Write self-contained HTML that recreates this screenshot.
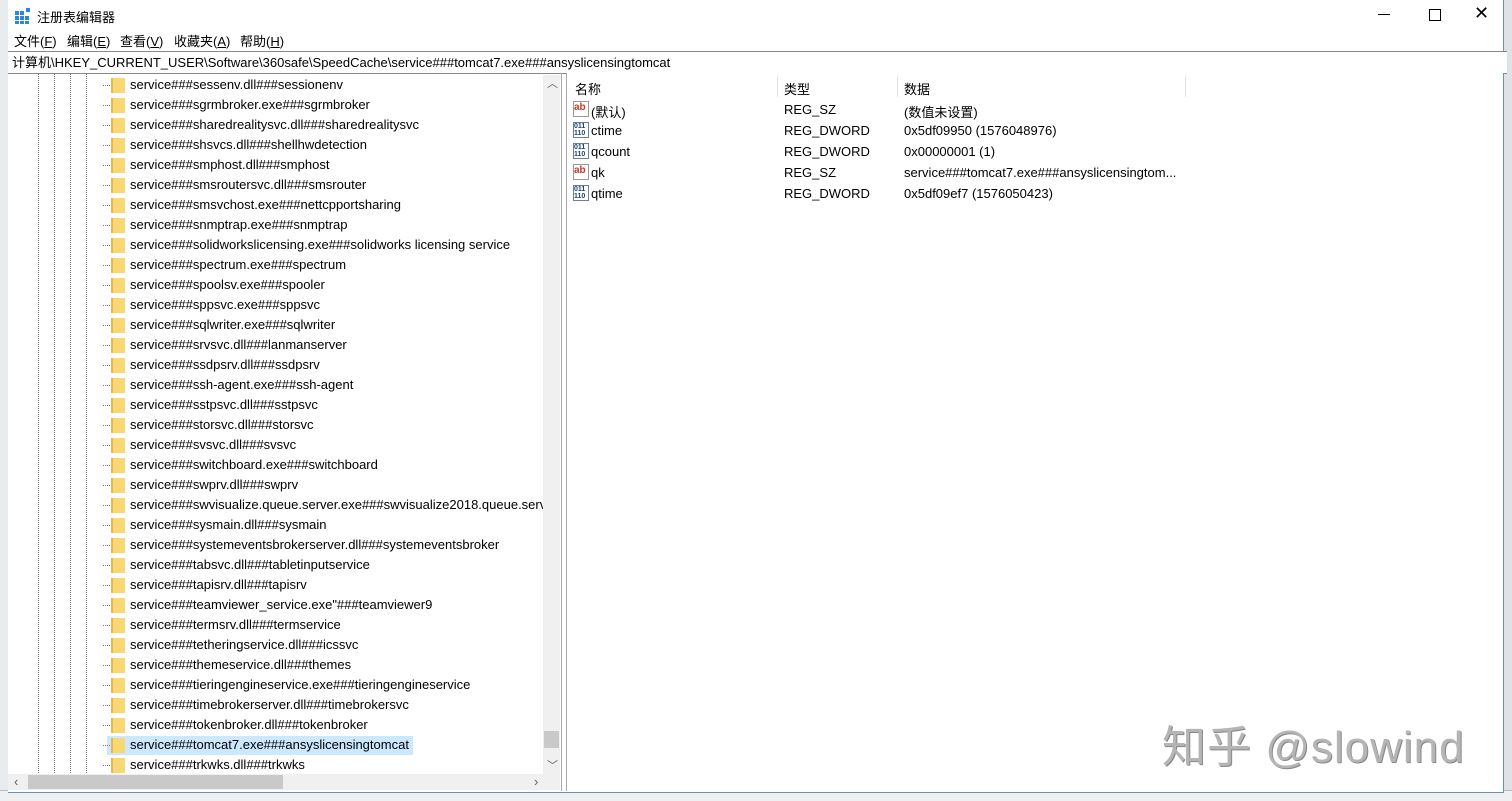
<!DOCTYPE html><html><head><meta charset="utf-8"><style>
body{margin:0;width:1512px;height:800px;overflow:hidden;background:#dfe3e8;font-family:"Liberation Sans","Noto Sans CJK SC",sans-serif;font-size:13px;color:#000;position:relative}
.abs{position:absolute}
.win{left:8px;top:0;width:1495px;height:792px;background:#fff;border-right:1px solid #6d8fb0;border-bottom:1px solid #6d8fb0}
.row{position:absolute;left:0;height:20px;line-height:20px;white-space:nowrap}
.fold{position:absolute;left:103px;top:3px;width:14px;height:15px;background:#f8d775;border-left:2px solid #e8b94a;box-sizing:border-box}
.txt{position:absolute;left:122px}
.vl{position:absolute;top:75px;height:700px;border-left:1px dotted #777}
.hd{position:absolute;left:95px;top:10px;width:7px;border-top:1px dotted #777}
</style></head><body>
<div class="abs" style="left:0;top:0;width:8px;height:800px;background:#e8ecef"></div>
<div class="abs" style="left:0;top:790px;width:1512px;height:10px;background:#eef0f2;border-top:1px solid #bbb"></div>
<div class="abs win">
 <svg class="abs" style="left:7px;top:7px" width="17" height="17"><rect x="0" y="4" width="4" height="4" fill="#2b88d8"/><rect x="5" y="4" width="4" height="4" fill="#2b88d8"/><rect x="0" y="9" width="4" height="4" fill="#2b88d8"/><rect x="5" y="9" width="4" height="4" fill="#2b88d8"/><rect x="10" y="9" width="4" height="4" fill="#2b88d8"/><rect x="0" y="14" width="4" height="3" fill="#2b88d8"/><rect x="5" y="14" width="4" height="3" fill="#2b88d8"/><rect x="10" y="14" width="4" height="3" fill="#2b88d8"/><rect x="11" y="1" width="4" height="4" fill="#2b88d8"/></svg>
 <div class="abs" style="left:29px;top:7px;font-size:13px">注册表编辑器</div>
 <div class="abs" style="left:1370px;top:14px;width:12px;border-top:1px solid #000"></div>
 <div class="abs" style="left:1421px;top:9px;width:10px;height:10px;border:1px solid #000"></div>
 <div class="abs" style="left:1466px;top:3px;font-size:18px;line-height:20px">✕</div>
 <div class="abs" style="left:6px;top:31px">文件(<u>F</u>)</div>
 <div class="abs" style="left:59px;top:31px">编辑(<u>E</u>)</div>
 <div class="abs" style="left:112px;top:31px">查看(<u>V</u>)</div>
 <div class="abs" style="left:166px;top:31px">收藏夹(<u>A</u>)</div>
 <div class="abs" style="left:232px;top:31px">帮助(<u>H</u>)</div>
 <div class="abs" style="left:0;top:51px;width:1495px;height:21px;border-top:1px solid #888;border-bottom:1px solid #888;background:#fff;line-height:21px;padding-left:4px">计算机\HKEY_CURRENT_USER\Software\360safe\SpeedCache\service###tomcat7.exe###ansyslicensingtomcat</div>
</div>
<div class="abs" style="left:8px;top:73px;width:553px;height:718px;overflow:hidden;border-right:1px solid #aaa">
 <div class="vl" style="left:30px;top:0"></div><div class="vl" style="left:46px;top:0"></div><div class="vl" style="left:62px;top:0"></div><div class="vl" style="left:78px;top:0"></div>
</div>
<div id="tree" class="abs" style="left:8px;top:75px;width:535px;height:700px;overflow:hidden"></div>
<div class="abs" style="left:543px;top:75px;width:17px;height:700px;background:#f0f0f0"><div class="abs" style="left:1px;top:656px;width:15px;height:17px;background:#c9c9c9"></div><div class="abs" style="left:4px;top:0;font-size:11px;color:#606060">︿</div><div class="abs" style="left:4px;top:682px;font-size:11px;color:#606060">﹀</div></div>
<div class="abs" style="left:8px;top:774px;width:552px;height:16px;background:#f0f0f0"><div class="abs" style="left:20px;top:1px;width:255px;height:14px;background:#c9c9c9"></div><div class="abs" style="left:6px;top:0;color:#606060">‹</div><div class="abs" style="left:526px;top:0;color:#606060">›</div></div>
<div class="abs" style="left:566px;top:73px;width:936px;height:718px;border-left:1px solid #aaa;background:#fff">
 <div class="abs" style="left:8px;top:6px">名称</div><div class="abs" style="left:217px;top:6px">类型</div><div class="abs" style="left:337px;top:6px">数据</div>
 <div class="abs" style="left:210px;top:2px;height:22px;border-left:1px solid #e5e5e5"></div><div class="abs" style="left:330px;top:2px;height:22px;border-left:1px solid #e5e5e5"></div><div class="abs" style="left:618px;top:2px;height:22px;border-left:1px solid #e5e5e5"></div>
 <div id="vals"></div>
 <div class="abs" style="left:595px;top:638px;font-size:44px;color:#b5b5b5;text-shadow:1px 1px 0 #888;letter-spacing:1px">知乎 @slowind</div>
</div>
<script>
var items=["sessenv.dll###sessionenv","sgrmbroker.exe###sgrmbroker","sharedrealitysvc.dll###sharedrealitysvc","shsvcs.dll###shellhwdetection","smphost.dll###smphost","smsroutersvc.dll###smsrouter","smsvchost.exe###nettcpportsharing","snmptrap.exe###snmptrap","solidworkslicensing.exe###solidworks licensing service","spectrum.exe###spectrum","spoolsv.exe###spooler","sppsvc.exe###sppsvc","sqlwriter.exe###sqlwriter","srvsvc.dll###lanmanserver","ssdpsrv.dll###ssdpsrv","ssh-agent.exe###ssh-agent","sstpsvc.dll###sstpsvc","storsvc.dll###storsvc","svsvc.dll###svsvc","switchboard.exe###switchboard","swprv.dll###swprv","swvisualize.queue.server.exe###swvisualize2018.queue.server","sysmain.dll###sysmain","systemeventsbrokerserver.dll###systemeventsbroker","tabsvc.dll###tabletinputservice","tapisrv.dll###tapisrv","teamviewer_service.exe\"###teamviewer9","termsrv.dll###termservice","tetheringservice.dll###icssvc","themeservice.dll###themes","tieringengineservice.exe###tieringengineservice","timebrokerserver.dll###timebrokersvc","tokenbroker.dll###tokenbroker","tomcat7.exe###ansyslicensingtomcat","trkwks.dll###trkwks"];
var h="";items.forEach(function(t,i){var sel=i==33;h+='<div class="row" style="top:'+(i*20)+'px;width:535px">'+(sel?'<div style="position:absolute;left:99px;top:1px;width:306px;height:19px;background:#cce8ff"></div>':'')+'<div class="hd"></div><div class="fold"></div><span class="txt">service###'+t+'</span></div>'});
document.getElementById('tree').innerHTML=h;
var v=[["ab","(默认)","REG_SZ","(数值未设置)"],["01","ctime","REG_DWORD","0x5df09950 (1576048976)"],["01","qcount","REG_DWORD","0x00000001 (1)"],["ab","qk","REG_SZ","service###tomcat7.exe###ansyslicensingtom..."],["01","qtime","REG_DWORD","0x5df09ef7 (1576050423)"]];
var g="";v.forEach(function(r,i){var y=27+i*21;var ic=r[0]=="ab"?'<div class="abs" style="left:6px;top:'+(y+1)+'px;width:14px;height:14px;border:1px solid #999;font-size:10px;line-height:12px;color:#c0392b;font-weight:bold;background:#fff">ab</div>':'<div class="abs" style="left:6px;top:'+(y+1)+'px;width:14px;height:14px;border:1px solid #6a7fa0;font-size:7px;line-height:7px;color:#1a3f7a;font-weight:bold;background:#fff">011<br>110</div>';g+=ic+'<div class="abs" style="left:24px;top:'+(y+2)+'px">'+r[1]+'</div><div class="abs" style="left:217px;top:'+(y+2)+'px">'+r[2]+'</div><div class="abs" style="left:337px;top:'+(y+2)+'px">'+r[3]+'</div>'});
document.getElementById('vals').innerHTML=g;
</script>
</body></html>
